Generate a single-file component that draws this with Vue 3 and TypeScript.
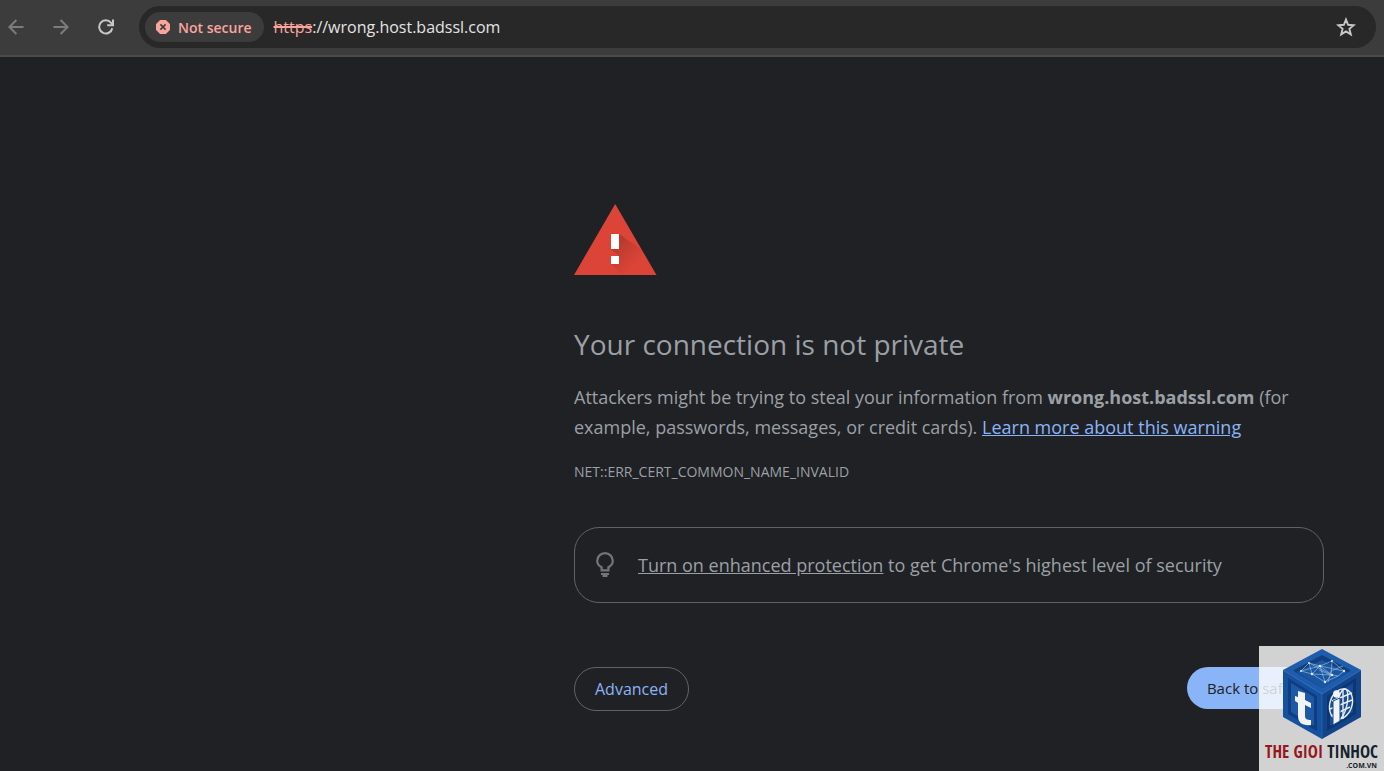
<script setup lang="ts">
import { ref } from 'vue'

const host = 'wrong.host.badssl.com'
const scheme = 'https'
const errorCode = 'NET::ERR_CERT_COMMON_NAME_INVALID'
const bookmarked = ref<boolean>(false)
</script>

<template>
  <div class="browser">
    <header class="toolbar">
      <nav class="nav" aria-label="History">
        <button class="icon-button dim" type="button" aria-label="Back">
          <svg width="16" height="16" viewBox="0 0 16 16" fill="none" stroke="currentColor" stroke-width="2">
            <path d="M15.5 8H1.8M8.4 1 1.4 8l7 7" />
          </svg>
        </button>
        <button class="icon-button dim" type="button" aria-label="Forward">
          <svg width="16" height="16" viewBox="0 0 16 16" fill="none" stroke="currentColor" stroke-width="2">
            <path d="M.5 8h13.7M7.6 1l7 7-7 7" />
          </svg>
        </button>
        <button class="icon-button" type="button" aria-label="Reload">
          <svg width="16" height="16" viewBox="0 0 16 16" fill="none" stroke="currentColor" stroke-width="2">
            <path d="M14.3 9.2A6.6 6.6 0 1 1 12.9 3.6L14.6 5.6" />
            <path d="M15 .6v5.6H9.2" />
          </svg>
        </button>
      </nav>
      <div class="omnibox">
        <button class="chip" type="button">
          <svg width="14" height="14" viewBox="0 0 14 14">
            <path d="M4.6.6h4.800L13.400 4.600v4.800L9.400 13.400H4.600L.6 9.400V4.600z" fill="#f9a59c" stroke="#f9a59c" stroke-width="1.400" stroke-linejoin="round" />
            <path d="m4.400 4.400 5.200 5.200m0-5.200L4.400 9.600" stroke="#3c3c3c" stroke-width="1.500" />
          </svg>
          <span>Not secure</span>
        </button>
        <div class="url"><s>{{ scheme }}</s>://{{ host }}</div>
        <button
          class="icon-button star"
          type="button"
          aria-label="Bookmark this tab"
          :aria-pressed="bookmarked"
          @click="bookmarked = !bookmarked"
        >
          <svg width="20" height="20" viewBox="0 0 20 20" :fill="bookmarked ? 'currentColor' : 'none'" stroke="currentColor" stroke-width="1.900">
            <path d="m10 2.500 2.100 5.300 5.700.4-4.400 3.650 1.400 5.550L10 14.400 5.200 17.400l1.400-5.550L2.200 8.200l5.700-.4z" />
          </svg>
        </button>
      </div>
    </header>

    <main class="page">
      <div class="interstitial">
        <svg class="warning" width="84" height="72" viewBox="0 0 84 72" role="img" aria-label="Warning">
          <defs>
            <linearGradient id="shade" gradientUnits="userSpaceOnUse" x1="41" y1="38" x2="62" y2="59">
              <stop offset="0" stop-color="#000" stop-opacity=".17" />
              <stop offset="1" stop-color="#000" stop-opacity="0" />
            </linearGradient>
          </defs>
          <path d="M41.200 0 82.500 71H0z" fill="#db4437" />
          <path d="M45 30 68 46 82.500 71H48L37 60h8v-8l-8-7h8z" fill="url(#shade)" />
          <path d="M37 30h8v15h-8zM37 52h8v8h-8z" fill="#fff" />
        </svg>
        <h1>Your connection is not private</h1>
        <p class="message">
          Attackers might be trying to steal your information from <strong>{{ host }}</strong> (for example,
          passwords, messages, or credit cards). <a class="learn" href="#learn">Learn more about this warning</a>
        </p>
        <p class="code">{{ errorCode }}</p>
        <div class="promo">
          <svg width="18" height="26" viewBox="0 0 18 26" fill="none" stroke="#757575" stroke-width="2.200">
            <path d="M5.600 18.400v-3.200C3 13.800 1.200 11.500 1.200 8.900a7.800 7.800 0 0 1 15.600 0c0 2.600-1.800 4.900-4.400 6.300v3.200z" />
            <path d="M5 22h8M6.500 24h5" />
          </svg>
          <p><a href="#protection">Turn on enhanced protection</a> to get Chrome's highest level of security</p>
        </div>
        <div class="actions">
          <button class="advanced" type="button">Advanced</button>
          <button class="safety" type="button">Back to safety</button>
        </div>
      </div>
    </main>

    <aside class="watermark">
      <svg width="80" height="92" viewBox="0 0 80 92" aria-hidden="true">
        <path d="M40 1 79 22 40 46 1 22z" fill="#1d5dab" />
        <path d="M40 7 69 22.500 40 40 11 22.500z" fill="#123f80" />
        <path d="m40 12 25 12.500L40 40 15 24z" fill="#1a57a3" />
        <path d="M1 22 40 46v45L1 69z" fill="#16519f" />
        <path d="m6 30 29 18v35L6 66z" fill="#0f3d80" />
        <path d="m9 35 23 14v29L9 64z" fill="#1c58a5" />
        <path d="M79 22 40 46v45l39-22z" fill="#124489" />
        <path d="M74 30 45 48v35l29-17z" fill="#0d3674" />
        <path d="M71 35 48 49v29l23-14z" fill="#174c94" />
        <path d="M1 22 40 46 79 22M40 46v45" fill="none" stroke="#2a68b1" stroke-width=".8" />
        <path
          d="m19 23 8-8 11 3 12-5 12 10-6 5-13 6-13-8-11-3zm8-8 3 11 8-8 12 9-7 7-5-16m12-5-1 14-12-5m24-4-12 5-3 11M30 26l20 1 6 1m-29-13 23 12M19 23l19-5 24 5"
          fill="none" stroke="#a9c7df" stroke-width=".6"
        />
        <g fill="#d8e8ee">
          <circle cx="27" cy="15" r="1" /><circle cx="38" cy="18" r="1.300" /><circle cx="50" cy="13" r="1" />
          <circle cx="62" cy="23" r="1.200" /><circle cx="50" cy="27" r="1.300" /><circle cx="30" cy="26" r="1.300" />
          <circle cx="43" cy="34" r="1.200" /><circle cx="19" cy="23" r="1" />
        </g>
        <path
          d="m16 43 7 2v7l6 3v5l-6-3v11c0 3 2 4 6 4v5c-8 1-13-2-13-9V55l-3-2v-5l3 1z"
          fill="#f1f3f4"
        />
        <g fill="none" stroke="#e8edf0" stroke-width="1.400">
          <ellipse cx="59" cy="56" rx="11" ry="15.500" transform="rotate(19 59 56)" />
          <ellipse cx="60" cy="56" rx="5" ry="15.500" transform="rotate(12 60 56)" />
          <path d="m50 53 20-8M48 61l22-9M49 68l19-9M61 41v30" />
        </g>
        <path d="m51 53 7-3v23l-7 4z" fill="#f1f3f4" stroke="#174c94" />
        <ellipse cx="54.500" cy="46" rx="3.500" ry="3.800" fill="#f1f3f4" />
      </svg>
      <div class="brand"><span class="red">THE GIOI</span> TINHOC</div>
      <div class="domain">.COM.VN</div>
    </aside>
  </div>
</template>

<style>
body {
  margin: 0;
  background: #202124;
}
</style>

<style scoped>
.browser {
  position: relative;
  min-height: 100vh;
  box-sizing: border-box;
  overflow: hidden;
  background: #202124;
  color: #9aa0a6;
  font-family: "Open Sans", "Noto Sans", sans-serif;
}
button {
  padding: 0;
  border: 0;
  background: none;
  color: inherit;
  font: inherit;
  cursor: pointer;
}
.toolbar {
  display: flex;
  align-items: center;
  gap: 16px;
  padding: 6px 8px 7px 0;
  border-bottom: 2px solid #4a4c4a;
  background: #3c3c3c;
}
.nav {
  display: flex;
  gap: 13px;
  padding-right: 1px;
}
.icon-button {
  display: grid;
  place-items: center;
  width: 32px;
  height: 32px;
  color: #c7c7c7;
}
.icon-button.dim {
  color: #7c7c7c;
}
.omnibox {
  flex: 1;
  display: flex;
  align-items: center;
  gap: 10px;
  height: 42px;
  padding: 0 14px 0 6px;
  box-sizing: border-box;
  border-radius: 21px;
  background: #282828;
}
.chip {
  display: flex;
  align-items: center;
  gap: 8px;
  height: 30px;
  padding: 0 12px 0 11px;
  border-radius: 15px;
  background: #3c3c3c;
  color: #f9a59c;
  font-size: 14px;
  font-weight: 600;
  white-space: nowrap;
}
.url {
  flex: 1;
  color: #e3e3e3;
  font-size: 16px;
  white-space: nowrap;
}
.url s {
  color: #f9a59c;
  text-decoration-thickness: 2px;
}
.page {
  padding: 147px 60px 60px;
}
.interstitial {
  max-width: 750px;
  margin-left: auto;
}
.warning {
  display: block;
}
h1 {
  margin: 48px 0 0;
  font-size: 28px;
  font-weight: 400;
  line-height: 40px;
}
.message {
  margin: 18px 0 0;
  font-size: 18px;
  line-height: 30px;
}
.learn {
  color: #8ab4f8;
}
.code {
  margin: 20px 0 0;
  font-size: 14px;
  line-height: 20px;
}
.promo {
  display: flex;
  align-items: center;
  gap: 24px;
  margin-top: 45px;
  padding: 22px 21px;
  border: 1px solid #5f6368;
  border-radius: 25px;
  font-size: 18px;
  line-height: 30px;
}
.promo p {
  margin: 0;
}
.promo a {
  color: inherit;
}
.actions {
  display: flex;
  justify-content: space-between;
  align-items: flex-start;
  margin-top: 64px;
}
.advanced {
  padding: 0 20px;
  border: 1px solid #5f6368;
  border-radius: 22px;
  color: #8ab4f8;
  font-size: 16px;
  line-height: 42px;
}
.safety {
  padding: 0 20px;
  border-radius: 21px;
  background: #8ab4f8;
  color: #202124;
  font-size: 15px;
  line-height: 42px;
}
.watermark {
  position: absolute;
  right: 0;
  bottom: 0;
  display: flex;
  flex-direction: column;
  align-items: center;
  width: 125px;
  height: 125px;
  padding-top: 2px;
  box-sizing: border-box;
  background: rgba(255, 255, 255, 0.8);
  pointer-events: none;
}
.watermark svg {
  flex: none;
}
.brand {
  color: #14232b;
  font-family: "Open Sans Condensed", "Liberation Sans Narrow", "DejaVu Sans Condensed", "Liberation Sans", sans-serif;
  font-size: 17px;
  font-weight: 700;
  line-height: 24px;
  white-space: nowrap;
}
.red {
  color: #951820;
}
.domain {
  align-self: flex-end;
  margin-right: 7px;
  color: #14232b;
  font-size: 7px;
  font-weight: 700;
  line-height: 4px;
}
</style>
